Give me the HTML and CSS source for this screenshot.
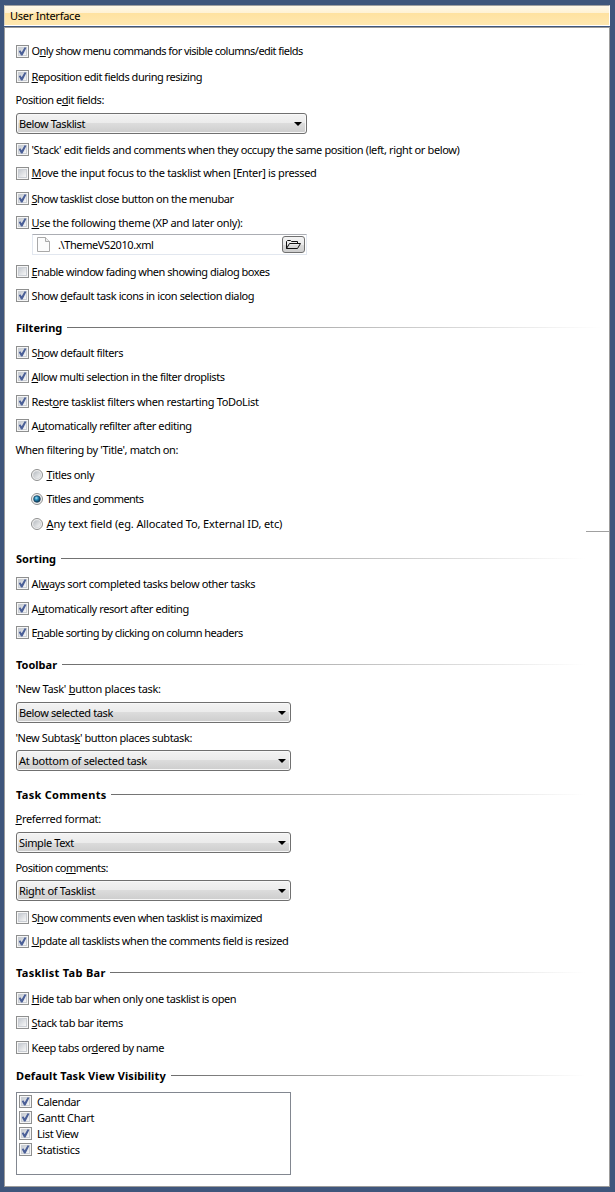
FILE: index.html
```html
<!DOCTYPE html>
<html lang="en">
<head>
<meta charset="utf-8">
<title>User Interface</title>
<link rel="stylesheet" href="styles.css">
</head>
<body>
<svg width="0" height="0" class="defs">
  <defs>
    <linearGradient id="boxfill" x1="0" y1="0" x2="1" y2="1"><stop offset="0" stop-color="#c3c8cf"/><stop offset="1" stop-color="#fafafa"/></linearGradient>
    <linearGradient id="ring" x1="0" y1="0" x2="1" y2="1"><stop offset="0" stop-color="#b4b9be"/><stop offset="1" stop-color="#f8f8f8"/></linearGradient>
    <radialGradient id="dot" cx=".4" cy=".35" r=".65"><stop offset="0" stop-color="#a5e4fb"/><stop offset=".45" stop-color="#2489b8"/><stop offset="1" stop-color="#0b3450"/></radialGradient>
    <symbol id="off" viewBox="0 0 13 13"><rect x=".5" y=".5" width="12" height="12" fill="#f6f6f6" stroke="#8e8f8f"/><rect x="2.5" y="2.5" width="8" height="8" fill="url(#boxfill)" stroke="#cbcfd5"/></symbol>
    <symbol id="on" viewBox="0 0 13 13"><use href="#off"/><path d="M2.8 6.2 4.3 5.2 5.7 7.2 8.6 2.3 10.4 2.7 6.5 10.4 5 10.4Z" fill="#4a5f97"/></symbol>
    <symbol id="radio" viewBox="0 0 13 13"><circle cx="6" cy="7" r="5.5" fill="#f4f4f4" stroke="#8e8f8f"/><circle cx="6" cy="7" r="3.8" fill="url(#ring)" stroke="#cfd2d6" stroke-width=".8"/></symbol>
    <symbol id="radio-on" viewBox="0 0 13 13"><use href="#radio"/><circle cx="6" cy="7" r="3.3" fill="url(#dot)" stroke="#173f5a" stroke-width=".7"/></symbol>
  </defs>
</svg>
<main class="window">
  <header class="title"><span>User Interface</span></header>
  <div class="panel">
    <section class="general">
      <label class="check"><svg><use href="#on"/></svg><span class="tightest up">O<u>n</u>ly show menu commands for visible columns/edit fields</span></label>
      <label class="check"><svg><use href="#on"/></svg><span class="tight"><u>R</u>eposition edit fields during resizing</span></label>
      <div class="caption"><span class="snug">Position e<u>d</u>it fields:</span></div>
      <div class="select wide"><span>Below Tasklist</span><i></i></div>
      <label class="check"><svg><use href="#on"/></svg><span class="even">'Stack' edit fields and comments when they occupy the same position (left, right or below)</span></label>
      <label class="check"><svg><use href="#off"/></svg><span class="loose up"><u>M</u>ove the input focus to the tasklist when [Enter] is pressed</span></label>
      <label class="check"><svg><use href="#on"/></svg><span class="snug"><u>S</u>how tasklist close button on the menubar</span></label>
      <label class="check"><svg><use href="#on"/></svg><span class="loose"><u>U</u>se the following theme (XP and later only):</span></label>
      <div class="file">
        <svg class="page" viewBox="0 0 14 17"><path d="M.5 1.5h8l4 4v10H.5z" fill="#fcfcfc" stroke="#a9a9a9"/><path d="M8.5 1.5v4h4" fill="#eee" stroke="#a9a9a9"/></svg>
        <span class="up">.\ThemeVS2010.xml</span>
        <div class="browse"><svg viewBox="0 0 17 11"><path d="M1.5 9.5V2.5l1-1h3l1 1h6v2M1.5 9.5l3-5h11l-3 5z" fill="none" stroke="#111"/></svg></div>
      </div>
      <label class="check"><svg><use href="#off"/></svg><span class="tight"><u>E</u>nable window fading when showing dialog boxes</span></label>
      <label class="check"><svg><use href="#on"/></svg><span>Show <u>d</u>efault task icons in icon selection dialog</span></label>
    </section>
    <section class="filtering">
      <h2 class="long"><span>Filtering</span></h2>
      <label class="check"><svg><use href="#on"/></svg><span>S<u>h</u>ow default filters</span></label>
      <label class="check"><svg><use href="#on"/></svg><span class="snug"><u>A</u>llow multi selection in the filter droplists</span></label>
      <label class="check"><svg><use href="#on"/></svg><span class="loose">Rest<u>o</u>re tasklist filters when restarting ToDoList</span></label>
      <label class="check"><svg><use href="#on"/></svg><span>A<u>u</u>tomatically refilter after editing</span></label>
      <div class="caption"><span class="even">When filtering by 'Title', match on:</span></div>
      <label class="check radio"><svg><use href="#radio"/></svg><span><u>T</u>itles only</span></label>
      <label class="check radio"><svg><use href="#radio-on"/></svg><span class="tightest">Titles and <u>c</u>omments</span></label>
      <label class="check radio"><svg><use href="#radio"/></svg><span class="loosest"><u>A</u>ny text field (eg. Allocated To, External ID, etc)</span></label>
    </section>
    <section class="sorting">
      <h2><span>Sorting</span></h2>
      <label class="check"><svg><use href="#on"/></svg><span class="even">Al<u>w</u>ays sort completed tasks below other tasks</span></label>
      <label class="check"><svg><use href="#on"/></svg><span>A<u>u</u>tomatically resort after editing</span></label>
      <label class="check"><svg><use href="#on"/></svg><span class="tighter">E<u>n</u>able sorting by clicking on column headers</span></label>
    </section>
    <section class="toolbar">
      <h2><span>Toolbar</span></h2>
      <div class="caption"><span class="looser">'New Task' <u>b</u>utton places task:</span></div>
      <div class="select"><span class="even">Below selected task</span><i></i></div>
      <div class="caption"><span>'New Subtas<u>k</u>' button places subtask:</span></div>
      <div class="select"><span class="looser">At bottom of selected task</span><i></i></div>
    </section>
    <section class="comments">
      <h2 class="spaced"><span>Task Comments</span></h2>
      <div class="caption"><span class="looser"><u>P</u>referred format:</span></div>
      <div class="select"><span class="even">Simple Text</span><i></i></div>
      <div class="caption"><span class="tightest">Position co<u>m</u>ments:</span></div>
      <div class="select"><span class="looser">Right of Tasklist</span><i></i></div>
      <label class="check"><svg><use href="#off"/></svg><span class="tighter">S<u>h</u>ow comments even when tasklist is maximized</span></label>
      <label class="check"><svg><use href="#on"/></svg><span class="snug up"><u>U</u>pdate all tasklists when the comments field is resized</span></label>
    </section>
    <section class="tabbar">
      <h2 class="spaced"><span>Tasklist Tab Bar</span></h2>
      <label class="check"><svg><use href="#on"/></svg><span><u>H</u>ide tab bar when only one tasklist is open</span></label>
      <label class="check"><svg><use href="#off"/></svg><span><u>S</u>tack tab bar items</span></label>
      <label class="check"><svg><use href="#off"/></svg><span>Keep tabs or<u>d</u>ered by name</span></label>
    </section>
    <section class="views">
      <h2 class="eased"><span>Default Task View Visibility</span></h2>
      <div class="list">
        <label class="check"><svg><use href="#on"/></svg><span>Calendar</span></label>
        <label class="check"><svg><use href="#on"/></svg><span class="looser">Gantt Chart</span></label>
        <label class="check"><svg><use href="#on"/></svg><span>List View</span></label>
        <label class="check"><svg><use href="#on"/></svg><span class="looser">Statistics</span></label>
      </div>
    </section>
    <div class="edge"></div>
  </div>
</main>
</body>
</html>
```
FILE: styles.css
```css
* { box-sizing: border-box; }
body { margin: 0; background: #3f567c; font: 11px/13px Tahoma, "Noto Sans", sans-serif; letter-spacing: -0.4px; color: #000; }
.defs { position: absolute; }
.window { width: 615px; height: 1192px; padding: 5px 5px 5px 4px; }
.title { height: 21px; padding: 3px 5px; border-top: 1px solid #a0a0a0; border-left: 1px solid #d8d0bd; border-bottom: 1px solid #fff; border-right: 1px solid #fff; background: linear-gradient(#fff8e8, #fff2d4 7px, #ffe2a0 7px, #ffe8b0); letter-spacing: -0.25px; }
.panel { position: relative; height: 1160px; margin-top: 1px; padding: 17px 0 0 11px; background: #fff; border: 1px solid #9c9c9c; }
section { display: grid; align-items: start; }
.general { grid-template-rows: 25px 23px 20px 30px 24px 25px 24px 18px 31px 24px 32px; }
.filtering { grid-template-rows: 25px 24px 25px 24px 24px 25px 24px 25px 35px; }
.sorting { grid-template-rows: 25px 25px 24px 32px; }
.toolbar { grid-template-rows: 24px 20px 29px 19px 38px; }
.comments { grid-template-rows: 24px 20px 29px 19px 31px 24px 31px; }
.tabbar { grid-template-rows: 26px 24px 25px 28px; }
.views { grid-template-rows: 23px 83px; }
.check { display: flex; gap: 2.5px; height: 13px; white-space: nowrap; }
.check svg { width: 13px; height: 13px; flex: none; }
.radio { padding-left: 15px; }
.caption { margin-left: -0.5px; white-space: nowrap; }
.tightest { letter-spacing: -0.55px; }
.tighter { letter-spacing: -0.51px; }
.tight { letter-spacing: -0.47px; }
.snug { letter-spacing: -0.45px; }
.even { letter-spacing: -0.37px; }
.loose { letter-spacing: -0.33px; }
.looser { letter-spacing: -0.28px; }
.loosest { letter-spacing: -0.12px; }
.up { margin-top: -1px; }
u { text-decoration: underline; text-underline-offset: 1px; text-decoration-thickness: 1px; text-decoration-skip-ink: none; }
h2 { display: flex; gap: 5px; width: 570px; height: 13px; margin: 0; font: bold 11px/13px Tahoma, "Noto Sans", sans-serif; letter-spacing: 0; white-space: nowrap; }
h2::after { content: ""; flex: 1; height: 1px; margin-top: 6px; background: linear-gradient(90deg, #6e6e6e, #fff); }
.long { width: 586px; }
.spaced { gap: 4px; letter-spacing: 0.3px; }
.eased { letter-spacing: 0.1px; }
.select { display: flex; align-items: center; justify-content: space-between; width: 275px; height: 21px; padding: 0 4px 0 2px; border: 1px solid #707070; border-radius: 3px; background: linear-gradient(#f3f3f3, #ebebeb 50%, #dcdcdc 50%, #cdcdcd); box-shadow: inset 0 0 0 1px #f8f8f8; }
.wide { width: 291px; }
.select i { border: solid transparent; border-width: 4px 4px 0; border-top-color: #000; }
.file { display: flex; align-items: center; width: 275px; height: 21px; margin-left: 16px; padding: 0 1px 0 4px; border: 1px solid #e2e7ef; border-top-color: #abadb3; }
.page { width: 14px; height: 17px; margin-right: 7px; }
.browse { display: flex; align-items: center; justify-content: center; width: 23px; height: 17px; margin-left: auto; border: 1px solid #707070; border-radius: 3px; background: linear-gradient(#f3f3f3, #ebebeb 50%, #dcdcdc 50%, #cdcdcd); }
.browse svg { width: 17px; height: 11px; }
.list { display: grid; grid-auto-rows: 16px; align-content: start; width: 275px; height: 83px; padding: 2px; border: 1px solid #828790; }
.list .check { gap: 5px; }
.edge { position: absolute; top: 503px; right: 0; width: 23px; height: 1px; background: #a0a0a0; }
```
